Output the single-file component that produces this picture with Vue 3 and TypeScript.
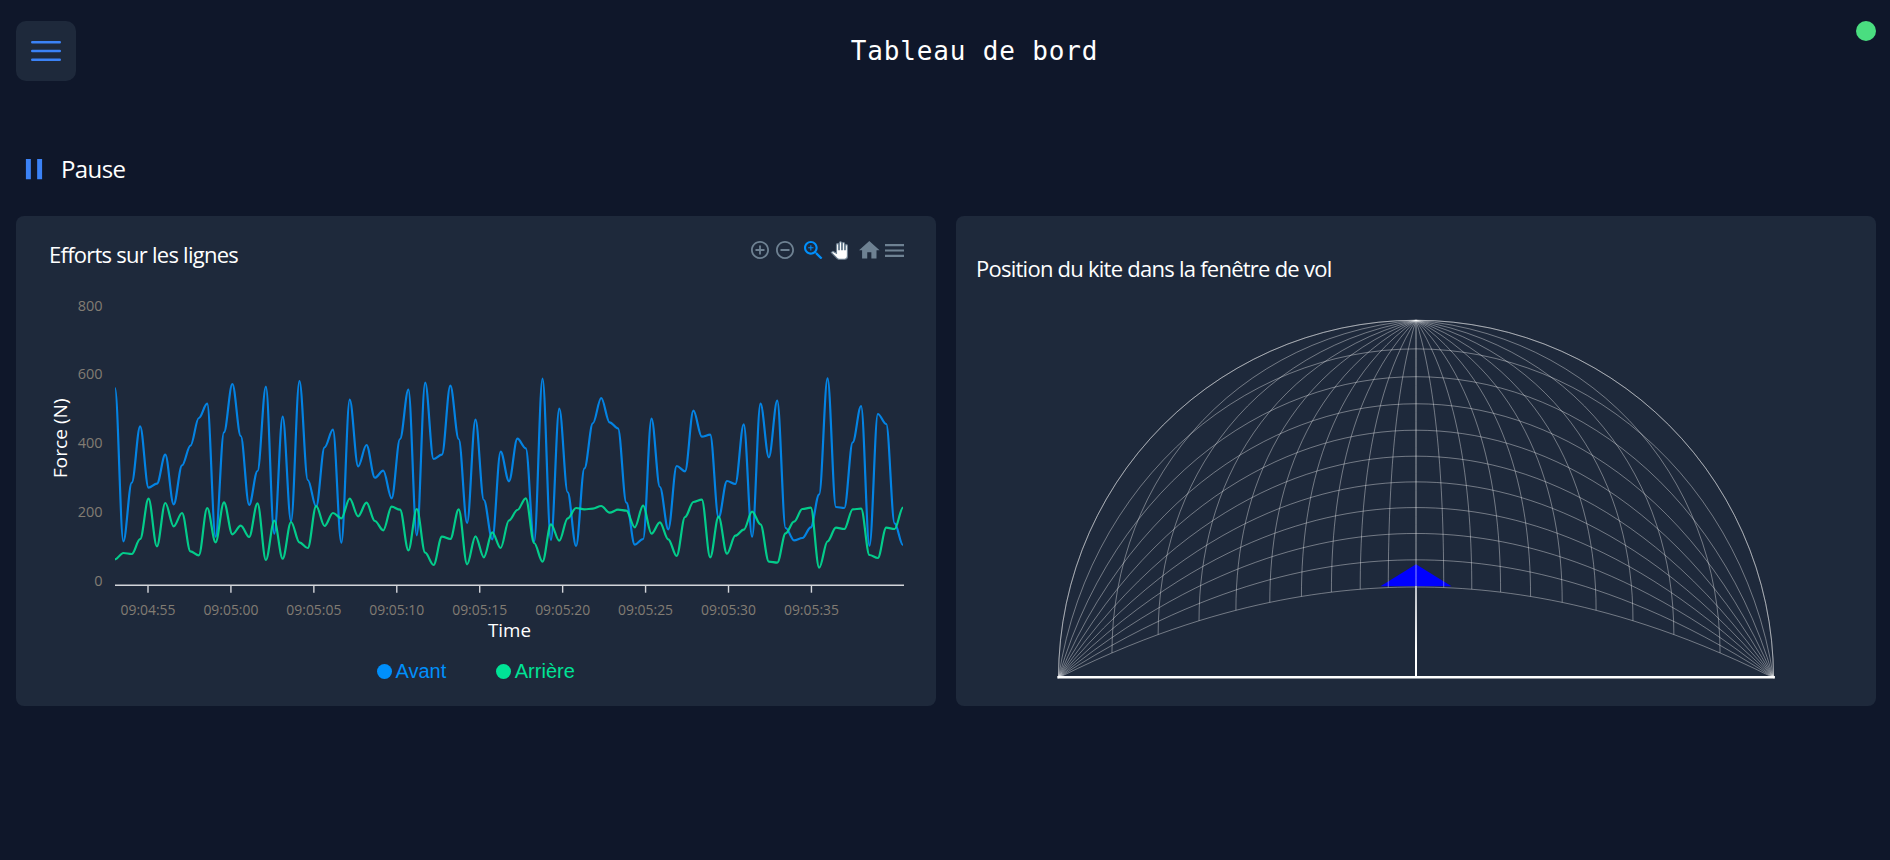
<script setup lang="ts">
const STEP = 8.383
const ORIGIN_X = 115

// Vertical sample offsets, in thirds of a pixel below y = 340.
const avant: number[] = [
  144, 604, 428, 259, 443, 431, 344, 493, 376, 317, 234, 191, 590, 277, 132, 288, 495, 393, 140, 581,
  230, 544, 123, 420, 500, 322, 269, 608, 179, 379, 315, 413, 392, 475, 297, 149, 586, 128, 357, 344,
  137, 297, 549, 239, 480, 598, 335, 424, 296, 325, 605, 116, 600, 206, 457, 618, 385, 250, 174, 247,
  265, 488, 614, 597, 236, 441, 568, 378, 394, 212, 290, 284, 533, 423, 432, 253, 590, 191, 352, 182,
  564, 601, 594, 562, 463, 115, 501, 504, 307, 198, 617, 222, 252, 550, 615,
]
const arriere: number[] = [
  658, 639, 642, 597, 476, 619, 489, 559, 519, 634, 646, 504, 607, 487, 583, 557, 591, 490, 660, 542,
  656, 546, 607, 624, 498, 558, 519, 535, 476, 529, 488, 543, 571, 500, 509, 631, 507, 638, 675, 590,
  597, 508, 673, 589, 652, 577, 624, 541, 510, 475, 609, 665, 553, 602, 535, 504, 508, 506, 498, 518,
  509, 512, 562, 497, 581, 547, 598, 648, 531, 486, 479, 652, 530, 641, 587, 569, 515, 553, 665, 668,
  580, 545, 507, 503, 683, 604, 563, 567, 508, 506, 645, 654, 563, 567, 503,
]

function smooth(samples: number[]): string {
  let d = ''
  samples.forEach((s, i) => {
    const x = ORIGIN_X + i * STEP
    const y = (340 + s / 3).toFixed(1)
    if (i === 0) {
      d = `M${x} ${y}`
      return
    }
    const prevY = (340 + samples[i - 1] / 3).toFixed(1)
    const k = STEP * 0.35
    d += `C${(x - STEP + k).toFixed(2)} ${prevY} ${(x - k).toFixed(2)} ${y} ${x.toFixed(2)} ${y}`
  })
  return d
}

const series = [
  { name: 'Avant', key: 'avant', path: smooth(avant) },
  { name: 'Arrière', key: 'arriere', path: smooth(arriere) },
]

const yTicks = [800, 600, 400, 200, 0].map((value, i) => ({ value, y: 310.7 + i * 68.75 }))
const xTicks = ['09:04:55', '09:05:00', '09:05:05', '09:05:10', '09:05:15', '09:05:20', '09:05:25', '09:05:30', '09:05:35']
  .map((label, i) => ({ label, x: 148 + i * 82.93 }))

// Flight window: quarter sphere seen in perspective from half its height.
const RADIUS = 357.5
const DISTANCE = 0.97
const CX = 1416
const HORIZON = 499

function project(x: number, y: number, z: number): string {
  const s = (RADIUS * DISTANCE) / (DISTANCE + z)
  return `${(CX + x * s).toFixed(2)},${(HORIZON - (y - 0.5) * s).toFixed(2)}`
}

const rad = (deg: number): number => (deg * Math.PI) / 180
const grid: string[] = []
for (let a = -90; a <= 90; a += 9) {
  const pts: string[] = []
  for (let p = 0; p <= 90; p += 3) {
    pts.push(project(Math.sin(rad(a)) * Math.cos(rad(p)), Math.sin(rad(p)), Math.cos(rad(a)) * Math.cos(rad(p))))
  }
  grid.push(pts.join(' '))
}
for (let p = 0; p <= 90; p += 9) {
  const pts: string[] = []
  for (let a = -90; a <= 90; a += 3) {
    pts.push(project(Math.sin(rad(a)), Math.cos(rad(a)) * Math.sin(rad(p)), Math.cos(rad(a)) * Math.cos(rad(p))))
  }
  grid.push(pts.join(' '))
}
</script>

<template>
  <div class="page">
    <header class="topbar">
      <button class="menu-button" aria-label="Menu">
        <svg width="40" height="40" viewBox="0 0 24 24"><path d="M3.75 6.75h16.5M3.75 12h16.5M3.75 17.25h16.5" /></svg>
      </button>
      <h1>Tableau de bord</h1>
      <span class="status"></span>
    </header>

    <div class="pause">
      <svg width="36" height="36" viewBox="0 0 24 24"><path d="M15.75 5.25v13.5m-7.5-13.5v13.5" /></svg>
      <span>Pause</span>
    </div>

    <main class="panels">
      <section class="panel">
        <div class="chart-head">
          <h2>Efforts sur les lignes</h2>
          <div class="toolbar">
            <svg class="i-in" width="18" height="18" viewBox="2 2 20 20"><path d="M13 7h-2v4H7v2h4v4h2v-4h4v-2h-4V7zm-1-5C6.48 2 2 6.48 2 12s4.48 10 10 10 10-4.48 10-10S17.52 2 12 2zm0 18c-4.41 0-8-3.59-8-8s3.59-8 8-8 8 3.59 8 8-3.59 8-8 8z" /></svg>
            <svg class="i-out" width="18" height="18" viewBox="2 2 20 20"><path d="M7 11v2h10v-2H7zm5-9C6.48 2 2 6.48 2 12s4.48 10 10 10 10-4.48 10-10S17.52 2 12 2zm0 18c-4.41 0-8-3.59-8-8s3.59-8 8-8 8 3.59 8 8-3.59 8-8 8z" /></svg>
            <svg class="i-zoom" width="18.4" height="18.4" viewBox="3 3 17.5 17.5"><path d="M15.5 14h-.79l-.28-.27C15.41 12.59 16 11.11 16 9.5 16 5.91 13.09 3 9.5 3S3 5.91 3 9.5 5.91 16 9.5 16c1.61 0 3.09-.59 4.23-1.57l.27.28v.79l5 4.99L20.49 19l-4.99-5zm-6 0C7.01 14 5 11.99 5 9.5S7.01 5 9.5 5 14 7.01 14 9.5 11.99 14 9.5 14z" /><path d="M12 10h-2v2H9v-2H7V9h2V7h1v2h2v1z" /></svg>
            <svg class="i-pan" width="18.4" height="19" viewBox="-.6 -1 24.6 26"><path d="M23 5.5V20c0 2.2-1.8 4-4 4h-7.3c-1.08 0-2.1-.43-2.85-1.19L1 14.83s1.26-1.23 1.3-1.25c.22-.19.49-.29.79-.29.22 0 .42.06.6.16.04.01 4.31 2.46 4.31 2.46V4c0-.83.67-1.5 1.5-1.5S11 3.17 11 4v7h1V1.5c0-.83.67-1.5 1.5-1.5S15 .67 15 1.5V11h1V2.5c0-.83.67-1.5 1.5-1.5s1.5.67 1.5 1.5V11h1V5.5c0-.83.67-1.5 1.5-1.5s1.5.67 1.5 1.5z" /></svg>
            <svg class="i-home" width="20.6" height="17.6" viewBox="2 3 20 17"><path d="M10 20v-6h4v6h5v-8h3L12 3 2 12h3v8z" /></svg>
            <svg class="i-menu" width="19.3" height="13" viewBox="3 6 18 12" preserveAspectRatio="none"><path d="M3 18h18v-2H3v2zm0-5h18v-2H3v2zm0-7v2h18V6H3z" /></svg>
          </div>
        </div>
        <svg class="plot" width="920" height="364" viewBox="16 286 920 364">
          <g class="tick-label">
            <text v-for="t in yTicks" :key="t.value" x="102.5" :y="t.y" text-anchor="end">{{ t.value }}</text>
            <text v-for="t in xTicks" :key="t.label" :x="t.x" y="615" text-anchor="middle" textLength="55" lengthAdjust="spacingAndGlyphs">{{ t.label }}</text>
          </g>
          <path v-for="s in series" :key="s.key" :d="s.path" class="line" :class="s.key" />
          <line class="axis" x1="115" x2="904" y1="585.2" y2="585.2" />
          <line v-for="t in xTicks" :key="t.label" class="axis" :x1="t.x" :x2="t.x" y1="586" y2="592.7" />
          <text class="axis-title" x="509.5" y="637" text-anchor="middle" textLength="43" lengthAdjust="spacingAndGlyphs">Time</text>
          <text class="axis-title" transform="translate(67 438.3) rotate(-90)" text-anchor="middle" textLength="80" lengthAdjust="spacingAndGlyphs">Force (N)</text>
        </svg>
        <div class="legend">
          <div v-for="s in series" :key="s.key" class="legend-item" :class="s.key"><i></i><span>{{ s.name }}</span></div>
        </div>
      </section>

      <section class="panel window">
        <h2>Position du kite dans la fenêtre de vol</h2>
        <svg width="920" height="406" viewBox="956 300 920 406">
          <defs>
            <linearGradient id="tether" gradientUnits="userSpaceOnUse" x1="0" x2="0" y1="586" y2="650">
              <stop offset="0" stop-color="#b9bdc4" />
              <stop offset="1" stop-color="#fff" />
            </linearGradient>
          </defs>
          <path class="kite" d="M1416 564.3L1451.5 586.3H1380.5z" />
          <polyline v-for="(g, i) in grid" :key="i" :points="g" class="mesh" />
          <rect class="meridian" x="1415" y="321" width="2" height="265" />
          <rect x="1415" y="586" width="2" height="91" fill="url(#tether)" />
          <rect x="1057.3" y="676" width="717.6" height="2.5" fill="#fff" />
        </svg>
      </section>
    </main>
  </div>
</template>

<style>
body {
  margin: 0;
  background: #0f172a;
}
</style>

<style scoped>
.page {
  box-sizing: border-box;
  width: 100%;
  height: 860px;
  padding: 21px 14px 0 16px;
  overflow: hidden;
  background: #0f172a;
  color: #fff;
  font-family: "Open Sans", "Noto Sans", sans-serif;
}
.topbar {
  display: flex;
  justify-content: space-between;
  height: 60px;
}
.menu-button {
  display: flex;
  align-items: center;
  justify-content: center;
  width: 60px;
  height: 60px;
  padding: 0;
  border: 0;
  border-radius: 10px;
  background: #1e293b;
}
.menu-button path {
  fill: none;
  stroke: #3b82f6;
  stroke-width: 1.5;
  stroke-linecap: round;
}
h1,
h2 {
  margin: 0;
  font-weight: 400;
}
h1 {
  margin-left: 17px;
  font: 400 26px/60px "DejaVu Sans Mono", monospace;
  letter-spacing: 0.85px;
}
.status {
  width: 20px;
  height: 20px;
  border-radius: 50%;
  background: #4ade80;
}
.pause {
  display: flex;
  align-items: center;
  gap: 9px;
  height: 36px;
  margin: 69.5px 0 0;
  font-size: 24px;
  letter-spacing: -0.6px;
}
.pause path {
  fill: none;
  stroke: #3b82f6;
  stroke-width: 3.3;
  stroke-linecap: butt;
}
.panels {
  display: grid;
  grid-template-columns: 1fr 1fr;
  gap: 20px;
  margin-top: 29.5px;
}
.panel {
  height: 490px;
  border-radius: 8px;
  background: #1e293b;
}
h2 {
  font-size: 22px;
  line-height: 30px;
  letter-spacing: -0.75px;
}
.chart-head {
  display: flex;
  justify-content: space-between;
  height: 70px;
}
.chart-head h2 {
  margin: 23px 0 0 33px;
}
.toolbar {
  display: flex;
  align-items: center;
  height: 19px;
  margin: 24.5px 31.7px 0 0;
}
.toolbar svg {
  display: block;
  fill: #6e8192;
}
.i-out {
  margin-left: 7px;
}
.toolbar .i-zoom {
  margin-left: 10.5px;
  fill: #008ffb;
}
.toolbar .i-pan {
  margin-left: 7.7px;
  fill: #fff;
  stroke: #6e8192;
  stroke-width: 1.6;
}
.i-home {
  margin-left: 10.6px;
}
.i-menu {
  margin-left: 5px;
}
.plot,
.window svg {
  display: block;
}
.tick-label {
  fill: #827c73;
  font-size: 14.5px;
}
.axis-title {
  fill: #fff;
  font-size: 18px;
}
.line {
  fill: none;
  stroke-width: 2.2;
  opacity: 0.88;
}
.line.avant {
  stroke: #008ffb;
}
.line.arriere {
  stroke: #00e396;
}
.axis {
  stroke: #d3d5da;
  stroke-width: 1.4;
}
.legend {
  display: flex;
  gap: 50px;
  margin-left: 361px;
  font: 20px/42px "Liberation Sans", Arial, sans-serif;
}
.legend-item {
  display: flex;
  align-items: center;
  gap: 3.5px;
}
.legend-item i {
  width: 15px;
  height: 15px;
  border-radius: 50%;
  background: currentColor;
}
.legend-item.avant {
  color: #008ffb;
}
.legend-item.arriere {
  color: #00e396;
}
.window h2 {
  padding: 37px 0 17px 20px;
}
.mesh {
  fill: none;
  stroke: #fff;
  stroke-width: 0.9;
  opacity: 0.42;
}
.kite {
  fill: #00f;
}
.meridian {
  fill: #fff;
  opacity: 0.12;
}
</style>
